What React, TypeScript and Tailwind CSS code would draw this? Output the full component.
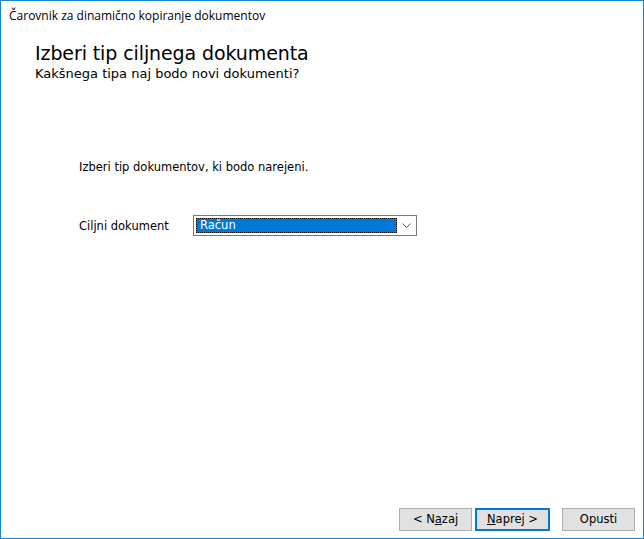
export default function App() {
  return (
    <div className="flex h-[539px] w-[644px] flex-col border border-[#1883d7] bg-white text-black">
      <div className="pl-[8px] pt-[7px] font-['Segoe_UI','Open_Sans',sans-serif] text-[12px] leading-[16px]">
        Čarovnik za dinamično kopiranje dokumentov
      </div>
      <div className="pl-[34px] pt-[17px] font-['DejaVu_Sans',sans-serif]">
        <h1 className="text-[19px] leading-[24px] tracking-[-0.1px]">Izberi tip ciljnega dokumenta</h1>
        <p className="pt-[1px] text-[13px] leading-[16px]">Kakšnega tipa naj bodo novi dokumenti?</p>
      </div>
      <div className="flex flex-1 flex-col pl-[78px] pt-[78px] font-['DejaVu_Sans',sans-serif] text-[11.5px]">
        <p className="leading-[14px]">Izberi tip dokumentov, ki bodo narejeni.</p>
        <div className="mt-[41px] flex items-center">
          <span className="w-[114px] leading-[14px]">Ciljni dokument</span>
          <div className="flex h-[21px] w-[224px] items-center border border-[#7a7a7a] bg-white p-[2px]">
            <div className="flex h-full flex-1 items-center border border-dotted border-black bg-[#0078d7] pl-[3px] text-white">
              Račun
            </div>
            <div className="flex w-[17px] items-center justify-center pl-[2px]">
              <svg width="9" height="5" viewBox="0 0 9 5" fill="none">
                <path d="M0.5 0.5 L4.5 4.5 L8.5 0.5" stroke="#606060" strokeWidth="1" />
              </svg>
            </div>
          </div>
        </div>
      </div>
      <div className="flex items-center justify-end pb-[7px] pr-[8px] font-['DejaVu_Sans',sans-serif] text-[11.5px]">
        <button className="h-[23px] w-[73px] border border-[#adadad] bg-[#e1e1e1]">
          &lt; N<span className="underline">a</span>zaj
        </button>
        <button className="ml-[3px] h-[23px] w-[75px] border-2 border-[#0078d7] bg-[#e1e1e1]">
          <span className="underline">N</span>aprej &gt;
        </button>
        <button className="ml-[12px] h-[23px] w-[73px] border border-[#adadad] bg-[#e1e1e1]">
          Opusti
        </button>
      </div>
    </div>
  );
}
